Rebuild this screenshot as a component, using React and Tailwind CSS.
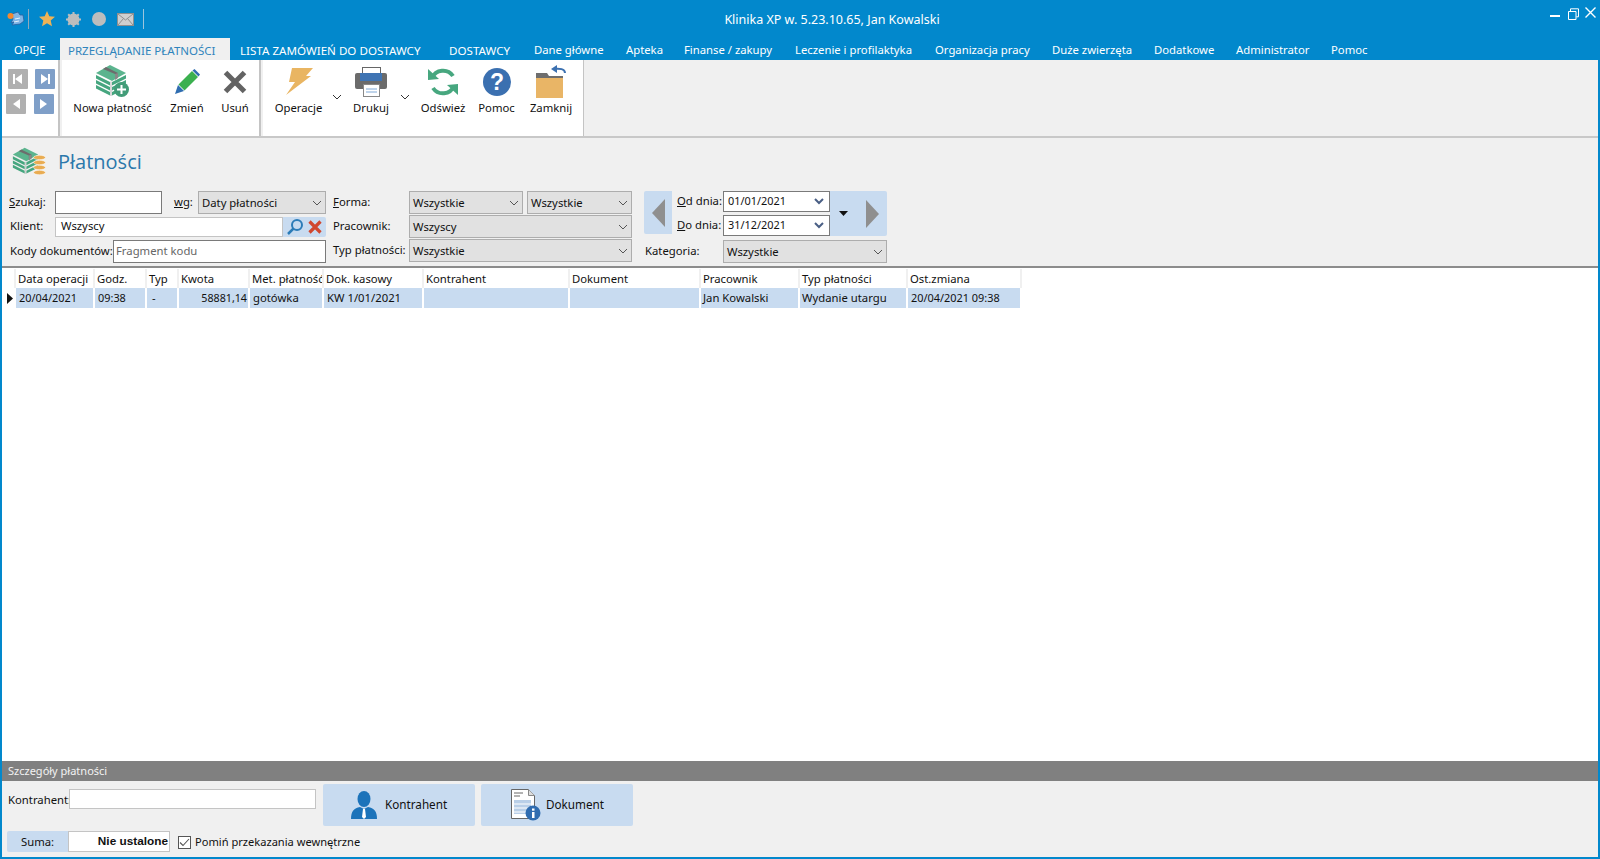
import React from "react";

const Chevron = ({ c = "#555" }) => (
  <svg width="10" height="6" viewBox="0 0 10 6" className="shrink-0"><path d="M1 1l4 4 4-4" fill="none" stroke={c} strokeWidth="1" /></svg>
);

const Combo = ({ text, className = "" }) => (
  <div className={"flex items-center justify-between h-[23px] pl-[3px] pr-[3px] bg-[#e1e1e1] border border-[#adadad] " + className}>
    <span className="pt-[1px]">{text}</span><Chevron />
  </div>
);

const Money = ({ className }) => (
  <svg viewBox="0 0 32 32" className={className}>
    <path d="M1 9L15 1l16 8-14 8z" fill="#5bb48e" />
    {[0, 5, 10].map((y) => (
      <g key={y} fill="#46a67f">
        <path d={`M1 ${11 + y}l14 7v3.5l-14-7z`} />
        <path d={`M17 ${18 + y}l14-7v3.5l-14 7z`} />
      </g>
    ))}
    <path d="M8 5l3-2 12 6v4l-3 2V10z" fill="#6d6d6d" />
    <path d="M20 10l3-1v5l-3 2z" fill="#888" />
    <path d="M15 17.5l2 0v15h-2z" fill="#a8a8a8" opacity="0.45" />
  </svg>
);

const Icons = {
  logo: (
    <svg width="18" height="16" viewBox="0 0 18 16">
      <path d="M5 3l6-2 2 3 3 0 1 6-4 3-8 1 2-3-3 1 2-4z" fill="#7fb5e6" stroke="#2a5f9e" strokeWidth="0.8" />
      <path d="M8 8l5-1M7 11l5-1" stroke="#fff" strokeWidth="0.8" />
      <circle cx="3.5" cy="5" r="3" fill="#f4892f" />
    </svg>
  ),
  star: (
    <svg width="16" height="16" viewBox="0 0 16 16"><path d="M8 0l2.3 5.3 5.7.5-4.3 3.8 1.3 5.6L8 12.3l-5 2.9 1.3-5.6L0 5.8l5.7-.5z" fill="#eeb356" /></svg>
  ),
  gear: (
    <svg width="15" height="15" viewBox="0 0 15 15">
      <circle cx="7.5" cy="7.5" r="6" fill="#bdbdbd" />
      <path d="M7.5 0v15M0 7.5h15M2.2 2.2l10.6 10.6M12.8 2.2L2.2 12.8" stroke="#bdbdbd" strokeWidth="2" />
    </svg>
  ),
  circle: <svg width="14" height="14" viewBox="0 0 14 14"><circle cx="7" cy="7" r="7" fill="#bdbdbd" /></svg>,
  mail: (
    <svg width="17" height="13" viewBox="0 0 17 13">
      <rect x="0.5" y="0.5" width="16" height="12" fill="#cfcfcf" stroke="#8f8f8f" />
      <path d="M1 1l7.5 6L16 1M1 12l5.5-6.5M16 12l-5.500-6.500" fill="none" stroke="#8f8f8f" />
    </svg>
  ),
};

const NavBtn = ({ color, dir, bar }) => (
  <div className="w-[20px] h-[20px] flex items-center justify-center rounded-[1px]" style={{ background: color }}>
    <svg width="12" height="12" viewBox="0 0 12 12">
      {dir === "l" ? <path d="M10 1v10L3 6z" fill="#fff" /> : <path d="M2 1v10l7-5z" fill="#fff" />}
      {bar && <rect x={dir === "l" ? 1 : 9} y="1" width="2" height="10" fill="#fff" />}
    </svg>
  </div>
);

const RibbonBtn = ({ icon, label, w }) => (
  <div className="flex flex-col items-center shrink-0" style={{ width: w }}>
    <div className="h-[37px] mt-[3px] flex items-center justify-center">{icon}</div>
    <div className="mt-0 leading-[16px] whitespace-nowrap text-[#111]">{label}</div>
  </div>
);

const Tab = ({ children, className = "" }) => (
  <div className={"h-[22px] flex items-center whitespace-nowrap pt-[3px] " + className}>{children}</div>
);

const columns = [
  { w: 79, h: "Data operacji", v: "20/04/2021", vf: "text-[10.9px]" },
  { w: 52, h: "Godz.", v: "09:38", vf: "text-[10.9px]" },
  { w: 32, h: "Typ", v: "-", vc: "pl-[5px]" },
  { w: 71, h: "Kwota", v: "58881,14", vc: "text-right pr-[1px]", vf: "text-[10.7px]" },
  { w: 74, h: "Met. płatność", v: "gotówka" },
  { w: 100, h: "Dok. kasowy", v: "KW 1/01/2021" },
  { w: 146, h: "Kontrahent", v: "" },
  { w: 131, h: "Dokument", v: "" },
  { w: 99, h: "Pracownik", v: "Jan Kowalski", vc: "pl-[2px]" },
  { w: 108, h: "Typ płatności", v: "Wydanie utargu", vc: "pl-[2px]" },
  { w: 114, h: "Ost.zmiana", v: "20/04/2021 09:38", vf: "text-[10.9px]" },
];

export default function App() {
  return (
    <div className="w-screen h-screen overflow-hidden flex flex-col bg-[#0288cc] text-[11.3px] text-[#111] font-['Noto_Sans','Open_Sans',sans-serif]">
      {/* title bar */}
      <div className="h-[38px] flex items-center shrink-0 text-white">
        <div className="flex items-center w-[144px] shrink-0 pl-[7px]">
          <div className="w-[20px]">{Icons.logo}</div>
          <div className="w-px h-[20px] bg-[#8fa9bb] ml-[1px]" />
          <div className="ml-[10px]">{Icons.star}</div>
          <div className="ml-[11px]">{Icons.gear}</div>
          <div className="ml-[11px]">{Icons.circle}</div>
          <div className="ml-[11px]">{Icons.mail}</div>
          <div className="w-px h-[20px] bg-[#9cc5dd] ml-[9px]" />
        </div>
        <div className="flex-1 text-center pr-[20px] pt-[2px] text-[12.5px] whitespace-nowrap">Klinika XP w. 5.23.10.65, Jan Kowalski</div>
        <div className="flex self-start pt-[7px] pr-[4px] w-[60px] justify-end">
          <div className="w-[10px] h-[2px] bg-white mt-[8px]" />
          <svg width="11" height="12" viewBox="0 0 11 12" className="ml-[8px] mt-[1px]"><path d="M.5 3.500h7.500v8H.5zM2.500 3V.8h8v8H8.300" fill="none" stroke="#fff" /></svg>
          <svg width="11" height="11" viewBox="0 0 11 11" className="ml-[6px]"><path d="M.5.500l10 10M10.500.500l-10 10" stroke="#fff" strokeWidth="1.400" /></svg>
        </div>
      </div>

      {/* tabs */}
      <div className="h-[22px] flex shrink-0 text-white pl-[14px]">
        <Tab className="w-[46px] text-[11px]">OPCJE</Tab>
        <Tab className="w-[170px] pl-[8px] bg-[#f0f0f0] text-[#2f84bc] text-[11.5px]">PRZEGLĄDANIE PŁATNOŚCI</Tab>
        <Tab className="ml-[10px] w-[209px] text-[11.6px]">LISTA ZAMÓWIEŃ DO DOSTAWCY</Tab>
        <Tab className="w-[85px] text-[11.6px]">DOSTAWCY</Tab>
        <Tab className="w-[92px]">Dane główne</Tab>
        <Tab className="w-[58px]">Apteka</Tab>
        <Tab className="w-[111px]">Finanse / zakupy</Tab>
        <Tab className="w-[140px]">Leczenie i profilaktyka</Tab>
        <Tab className="w-[117px]">Organizacja pracy</Tab>
        <Tab className="w-[102px]">Duże zwierzęta</Tab>
        <Tab className="w-[82px]">Dodatkowe</Tab>
        <Tab className="w-[95px]">Administrator</Tab>
        <Tab>Pomoc</Tab>
      </div>

      {/* body */}
      <div className="flex-1 min-h-0 mx-[2px] mb-[2px] bg-[#f0f0f0] flex flex-col">
        {/* ribbon */}
        <div className="h-[78px] shrink-0 flex border-b-2 border-[#c8c8c8]">
          <div className="w-[56px] bg-white pl-[4px] pt-[9px] shrink-0">
            <div className="flex gap-[7px] pl-[2px]"><NavBtn color="#b0b0b0" dir="l" bar /><NavBtn color="#7f9fc8" dir="r" bar /></div>
            <div className="flex gap-[8px] mt-[5px]"><NavBtn color="#b0b0b0" dir="l" /><NavBtn color="#7f9fc8" dir="r" /></div>
          </div>
          <div className="w-[2px] bg-[#c4c4c4] shrink-0" />
          <div className="w-[2px] shrink-0" />
          <div className="w-[197px] bg-white flex shrink-0 pl-[6px]">
            <RibbonBtn w={89} label="Nowa płatność" icon={
              <div className="relative w-[32px] h-[32px] -ml-[4px] -mt-[3px]">
                <Money className="w-[32px] h-[32px]" />
                <svg width="15" height="15" viewBox="0 0 15 15" className="absolute right-[-2px] bottom-[-1px]"><circle cx="7.500" cy="7.500" r="7.500" fill="#429c78" /><path d="M7.500 3v9M3 7.500h9" stroke="#fff" strokeWidth="2" /></svg>
              </div>} />
            <RibbonBtn w={60} label="Zmień" icon={
              <svg width="26" height="26" viewBox="0 0 26 26">
                <path d="M1 25l3-9 6 6z" fill="#2f6db0" />
                <path d="M4.500 15.500L18 2l6 6-13.500 13.500z" fill="#3bb04f" />
                <path d="M18.500 1.500l2-1.500 5.500 5.500-1.500 2z" fill="#2f6db0" />
              </svg>} />
            <RibbonBtn w={36} label="Usuń" icon={
              <svg width="24" height="24" viewBox="0 0 24 24"><path d="M2.500 2.500l19 19M21.500 2.500l-19 19" stroke="#636363" strokeWidth="5" /></svg>} />
          </div>
          <div className="w-[2px] bg-[#c4c4c4] shrink-0" />
          <div className="w-[2px] shrink-0" />
          <div className="w-[320px] bg-white flex shrink-0 pl-[2px]">
            <RibbonBtn w={67} label="Operacje" icon={
              <svg width="28" height="28" viewBox="0 0 28 28"><path d="M7 0h21l-7 8h5L1 27l9-13H4z" fill="#e9b562" /></svg>} />
            <div className="w-[10px] shrink-0 pt-[34px]"><Chevron c="#333" /></div>
            <RibbonBtn w={58} label="Drukuj" icon={
              <svg width="32" height="30" viewBox="0 0 32 30">
                <rect x="7.500" y="0.500" width="18" height="8" fill="#fff" stroke="#666" />
                <rect x="0" y="6" width="32" height="16" rx="2" fill="#6b6b6b" />
                <rect x="5" y="6" width="22" height="8" fill="#3f74b3" />
                <rect x="8.500" y="17.500" width="16" height="12" fill="#fff" stroke="#888" />
                <path d="M11 22h11M11 25h11" stroke="#7fa8d6" />
              </svg>} />
            <div className="w-[10px] shrink-0 pt-[34px]"><Chevron c="#333" /></div>
            <RibbonBtn w={66} label="Odśwież" icon={
              <svg width="32" height="30" viewBox="0 0 32 30">
                <path d="M5 11A12 12 0 0 1 26 9" fill="none" stroke="#47a77f" strokeWidth="4" />
                <path d="M27 19A12 12 0 0 1 6 21" fill="none" stroke="#47a77f" strokeWidth="4" />
                <path d="M1 2l0 11 11-1z" fill="#47a77f" />
                <path d="M31 28l0-11-11 1z" fill="#47a77f" />
              </svg>} />
            <RibbonBtn w={41} label="Pomoc" icon={
              <svg width="28" height="28" viewBox="0 0 28 28">
                <circle cx="14" cy="14" r="14" fill="#3b70b0" />
                <text x="14" y="22" textAnchor="middle" fontSize="23" fontWeight="700" fill="#fff" fontFamily="Liberation Sans, sans-serif">?</text>
              </svg>} />
            <RibbonBtn w={68} label="Zamknij" icon={
              <svg width="30" height="33" viewBox="0 0 30 33">
                <path d="M0 8h11l2 3h14v4H0z" fill="#6e6e6e" />
                <rect x="0" y="13" width="27" height="20" fill="#e9b566" />
                <path d="M29 8c0-4-5-5-12-4" fill="none" stroke="#3b70b0" strokeWidth="2" />
                <path d="M21 0l-6 4 6 4z" fill="#3b70b0" />
              </svg>} />
          </div>
          <div className="w-px bg-[#c4c4c4] shrink-0" />
        </div>

        {/* heading */}
        <div className="h-[50px] shrink-0 flex items-center pl-[10px] pb-[2px]">
          <div className="relative w-[34px] h-[28px] -mt-[3px] shrink-0">
            <Money className="w-[27px] h-[27px]" />
            <svg width="13" height="20" viewBox="0 0 12 20" className="absolute right-[0px] bottom-0">
              {[0, 5, 10, 15].map((y) => <ellipse key={y} cx="6" cy={2.500 + y} rx="6" ry="2.200" fill="#e9ac52" stroke="#fff" strokeWidth="0.500" />)}
            </svg>
          </div>
          <div className="ml-[12px] text-[20px] leading-[26px] text-[#2b78ab] font-['Open_Sans','Noto_Sans',sans-serif]">Płatności</div>
        </div>

        {/* filters */}
        <div className="flex shrink-0 h-[76px] pt-[3px]">
          <div className="w-[324px] shrink-0 pl-[7px] flex flex-col">
            <div className="h-[23px] flex items-center">
              <span className="w-[46px]"><u>S</u>zukaj:</span>
              <div className="w-[107px] h-[23px] bg-white border border-[#7a7a7a]" />
              <span className="ml-[12px] w-[24px]"><u>w</u>g:</span>
              <Combo text="Daty płatności" className="w-[128px]" />
            </div>
            <div className="h-[21px] mt-[2px] flex items-center">
              <span className="w-[46px] pl-[1px]">Klient:</span>
              <div className="w-[228px] h-[20px] bg-white border border-[#c4c4c4] flex items-center pl-[5px]">Wszyscy</div>
              <div className="w-[43px] h-[20px] bg-[#c8dbf0] rounded-r-[2px] flex items-center justify-between pl-[3px] pr-[4px]">
                <svg width="18" height="18" viewBox="0 0 18 18"><circle cx="11" cy="7" r="5" fill="none" stroke="#2c7cb8" strokeWidth="2" /><path d="M7.500 10.500L2 16" stroke="#2c7cb8" strokeWidth="2.500" /></svg>
                <svg width="14" height="14" viewBox="0 0 14 14"><path d="M1.500 1.500l11 11M12.500 1.500l-11 11" stroke="#d1472f" strokeWidth="3.200" /></svg>
              </div>
            </div>
            <div className="h-[23px] mt-[3px] flex items-center">
              <span className="w-[104px] pl-[1px] whitespace-nowrap">Kody dokumentów:</span>
              <div className="w-[213px] h-[23px] bg-white border border-[#7a7a7a] flex items-center pl-[2px] text-[#666]">Fragment kodu</div>
            </div>
          </div>

          <div className="w-[299px] shrink-0 ml-[7px] flex flex-col gap-[1px]">
            <div className="flex items-center">
              <span className="w-[76px]"><u>F</u>orma:</span>
              <Combo text="Wszystkie" className="w-[114px]" />
              <Combo text="Wszystkie" className="w-[105px] ml-[4px]" />
            </div>
            <div className="flex items-center">
              <span className="w-[76px]">Pracownik:</span>
              <Combo text="Wszyscy" className="w-[223px]" />
            </div>
            <div className="flex items-center">
              <span className="w-[76px] whitespace-nowrap">Typ płatności:</span>
              <Combo text="Wszystkie" className="w-[223px]" />
            </div>
          </div>

          <div className="w-[243px] shrink-0 ml-[12px] flex flex-col">
            <div className="flex h-[45px]">
              <div className="w-[28px] h-[43px] bg-[#c8dbf0] rounded-l-[2px] flex items-center justify-center">
                <svg width="13" height="28" viewBox="0 0 13 28"><path d="M13 0v28L0 14z" fill="#8f8f8f" /></svg>
              </div>
              <div className="w-[51px] flex flex-col pl-[5px]">
                <div className="h-[21px] flex items-center whitespace-nowrap"><span><u>O</u>d dnia:</span></div>
                <div className="h-[21px] mt-[3px] flex items-center whitespace-nowrap"><span><u>D</u>o dnia:</span></div>
              </div>
              <div className="w-[107px] flex flex-col">
                {["01/01/2021", "31/12/2021"].map((d, i) => (
                  <div key={d} className={"h-[21px] bg-white border border-[#7a7a7a] flex items-center justify-between pl-[4px] pr-[5px] text-[10.9px] " + (i ? "mt-[3px]" : "")}>
                    <span>{d}</span>
                    <svg width="10" height="7" viewBox="0 0 10 7"><path d="M1 1l4 4 4-4" fill="none" stroke="#4a5f85" strokeWidth="2" /></svg>
                  </div>
                ))}
              </div>
              <div className="w-[57px] h-[45px] bg-[#c8dbf0] rounded-r-[2px] flex items-center pl-[9px]">
                <svg width="9" height="5" viewBox="0 0 9 5"><path d="M0 0h9L4.500 5z" fill="#111" /></svg>
                <svg width="13" height="28" viewBox="0 0 13 28" className="ml-[18px]"><path d="M0 0v28l13-14z" fill="#8f8f8f" /></svg>
              </div>
            </div>
            <div className="flex items-center mt-[4px] h-[23px]">
              <span className="w-[79px] pl-[1px]">Kategoria:</span>
              <Combo text="Wszystkie" className="w-[164px]" />
            </div>
          </div>
        </div>

        {/* grid */}
        <div className="flex-1 min-h-0 bg-white border-t-2 border-[#8c8c8c] mt-[2px]">
          <div className="flex h-[20px] pt-[1px]">
            <div className="w-[14px] border-r-2 border-[#f0f0f0]" />
            {columns.map((c) => (
              <div key={c.h} style={{ width: c.w }} className="border-r-2 border-[#f0f0f0] pl-[2px] leading-[20px] whitespace-nowrap overflow-hidden">{c.h}</div>
            ))}
          </div>
          <div className="flex h-[20px]">
            <div className="w-[14px] flex items-center pl-[5px] border-r-2 border-white">
              <svg width="6" height="11" viewBox="0 0 6 11"><path d="M0 0v11l6-5.500z" fill="#111" /></svg>
            </div>
            {columns.map((c) => (
              <div key={c.h} style={{ width: c.w }} className={"bg-[#c8dbf0] border-r-2 border-white leading-[20px] whitespace-nowrap overflow-hidden " + (c.vc || "pl-[3px] ") + " " + (c.vf || "")}>{c.v}</div>
            ))}
          </div>
        </div>

        {/* details */}
        <div className="h-[20px] shrink-0 bg-[#808080] text-[#f2f2f2] flex items-center pl-[6px] pt-[1px] text-[11px]">Szczegóły płatności</div>
        <div className="h-[76px] shrink-0">
          <div className="flex pt-[3px] h-[45px]">
            <span className="w-[67px] pl-[6px] mt-[8px] whitespace-nowrap">Kontrahent:</span>
            <div className="w-[247px] h-[20px] mt-[5px] mr-[1px] bg-white border border-[#c4c4c4]" />
            <div className="w-[152px] h-[42px] ml-[6px] bg-[#c8dbf0] rounded-[2px] flex items-center pl-[28px]">
              <svg width="26" height="28" viewBox="0 0 26 28">
                <ellipse cx="13" cy="8" rx="6.500" ry="8" fill="#1c73ba" />
                <path d="M0 28c0-8 3-11 9-12l4 2 4-2c6 1 9 4 9 12z" fill="#1c73ba" />
                <path d="M12 18h2l1 8-2 2-2-2z" fill="#fff" />
              </svg>
              <span className="ml-[8px] text-[11.7px]">Kontrahent</span>
            </div>
            <div className="w-[152px] h-[42px] ml-[6px] bg-[#c8dbf0] rounded-[2px] flex items-center pl-[30px]">
              <svg width="30" height="32" viewBox="0 0 30 32">
                <path d="M.5.500h17l6 6v23H.5z" fill="#fff" stroke="#666" />
                <path d="M17.500.500v6h6" fill="#ddd" stroke="#888" />
                <path d="M3 4h9M3 7h6" stroke="#666" />
                <rect x="3" y="11" width="17" height="14" fill="#b9cfe8" />
                <path d="M3 15h17M3 19h17M3 23h17" stroke="#fff" />
                <circle cx="22" cy="24" r="7.500" fill="#2f6cb0" />
                <rect x="21" y="23" width="2.500" height="6" fill="#fff" />
                <rect x="21" y="19.500" width="2.500" height="2.200" fill="#fff" />
              </svg>
              <span className="ml-[5px] text-[11.7px]">Dokument</span>
            </div>
          </div>
          <div className="flex items-center mt-[5px] pl-[5px]">
            <div className="w-[61px] h-[21px] bg-[#c8dbf0] rounded-l-[2px] flex items-center pl-[14px] pt-[1px]">Suma:</div>
            <div className="w-[102px] h-[21px] bg-white border border-[#c4c4c4] flex items-center justify-end pr-[1px] font-['Liberation_Sans',sans-serif] font-bold text-[11.8px]">Nie ustalone</div>
            <div className="w-[13px] h-[13px] ml-[8px] mt-[1px] border border-[#555] bg-white flex items-center justify-center">
              <svg width="11" height="9" viewBox="0 0 11 9"><path d="M1 4.500l3 3L10 1" fill="none" stroke="#555" strokeWidth="1.100" /></svg>
            </div>
            <span className="ml-[4px] pt-[2px] text-[11.1px]">Pomiń przekazania wewnętrzne</span>
          </div>
        </div>
      </div>
    </div>
  );
}
